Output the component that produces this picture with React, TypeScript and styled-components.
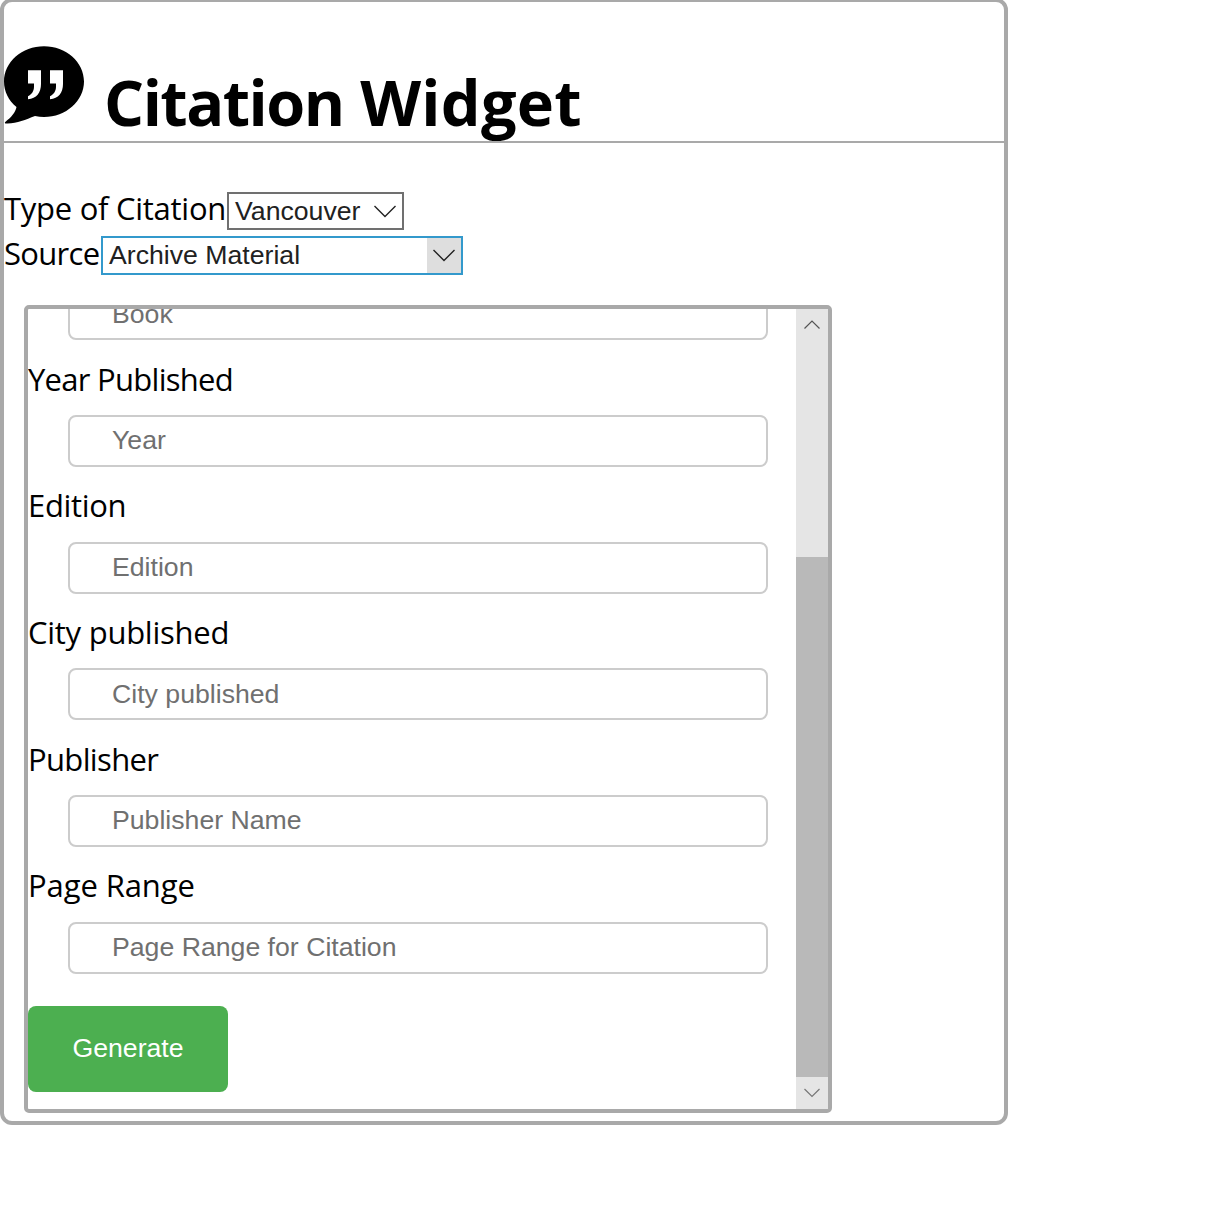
import React from "react";
import styled, { createGlobalStyle } from "styled-components";

const GlobalStyle = createGlobalStyle`
  *, *::before, *::after { box-sizing: border-box; }
  body {
    margin: 0;
    background: #fff;
    color: #000;
    font-family: "Segoe UI", "Open Sans", "Noto Sans", sans-serif;
  }
`;

const Widget = styled.main`
  display: flow-root;
  width: 1008px;
  height: 1127px;
  margin-top: -2px;
  border: 4px solid #a9a9a9;
  border-radius: 12px;
`;

const Header = styled.header`
  display: flex;
  align-items: flex-start;
  height: 141px;
  padding-top: 42px;
  border-bottom: 2px solid #a9a9a9;
`;

const Logo = styled.svg`
  flex: none;
  width: 80px;
  height: 82px;
`;

const Title = styled.h1`
  margin: 16px 0 0 20px;
  font-size: 63px;
  font-weight: 700;
  line-height: 84px;
  white-space: nowrap;
`;

const Word = styled.span<{ $spacing: number }>`
  letter-spacing: ${(p) => p.$spacing}px;
`;

const Options = styled.div`
  display: flex;
  flex-direction: column;
  gap: 5px;
  padding-top: 49px;
`;

const OptionRow = styled.div`
  display: flex;
  align-items: flex-start;
  height: 39px;
`;

const Caption = styled.label<{ $width?: number; $spacing?: number; $line?: number }>`
  display: block;
  flex: none;
  width: ${(p) => (p.$width ? `${p.$width}px` : "auto")};
  font-size: 31px;
  line-height: ${(p) => p.$line ?? 40}px;
  letter-spacing: ${(p) => p.$spacing ?? 0}px;
  white-space: nowrap;
`;

const SelectBox = styled.button<{ $width: number; $active?: boolean }>`
  display: flex;
  align-items: stretch;
  justify-content: space-between;
  width: ${(p) => p.$width}px;
  height: ${(p) => (p.$active ? 39 : 38)}px;
  padding: 0 0 0 6px;
  border: 2px solid ${(p) => (p.$active ? "#3399cc" : "#707070")};
  background: #fff;
  color: #212121;
  font-family: "Liberation Sans", Arial, sans-serif;
  font-size: 26.67px;
  line-height: 34px;
`;

const Arrow = styled.span<{ $active?: boolean }>`
  display: flex;
  align-items: center;
  justify-content: center;
  width: 34px;
  background: ${(p) => (p.$active ? "#dedede" : "transparent")};
`;

const Panel = styled.section`
  display: flex;
  width: 808px;
  height: 808px;
  margin: 30px 0 0 20px;
  border: 4px solid #a9a9a9;
  border-radius: 5px;
  overflow: hidden;
`;

const Form = styled.form`
  flex: 1;
  overflow: hidden;
`;

const Fields = styled.div`
  margin-top: -95.33px;
`;

const Field = styled.div`
  height: 126.67px;
  padding-top: 18.5px;
`;

const Input = styled.input`
  display: block;
  width: 700px;
  height: 52px;
  margin: 16.17px 0 0 40px;
  padding: 0 42px;
  border: 2px solid #ccc;
  border-radius: 8px;
  outline: none;
  background: #fff;
  font-family: "Liberation Sans", Arial, sans-serif;
  font-size: 26.67px;
  &::placeholder { color: #707070; opacity: 1; }
`;

const Generate = styled.button`
  display: block;
  width: 200px;
  height: 86px;
  margin-top: 32.33px;
  padding: 0 0 1px;
  border: 0;
  border-radius: 8px;
  background: #4caf50;
  color: #fff;
  font-family: "Liberation Sans", Arial, sans-serif;
  font-size: 26.67px;
`;

const Scrollbar = styled.div`
  display: flex;
  flex-direction: column;
  width: 32px;
  background: #e5e5e5;
`;

const ScrollButton = styled.div`
  display: flex;
  align-items: center;
  justify-content: center;
  height: 32px;
`;

const Track = styled.div`
  display: flex;
  flex: 1;
  align-items: flex-end;
`;

const Thumb = styled.div`
  width: 100%;
  height: 520px;
  background: #b9b9b9;
`;

function Chevron({ up, width = 22, color = "#222", stroke = 1.4 }: { up?: boolean; width?: number; color?: string; stroke?: number }) {
  return (
    <svg width={width} height={width / 2 + 2} viewBox={`0 0 ${width} ${width / 2 + 2}`} fill="none" stroke={color} strokeWidth={stroke}>
      <path d={up ? `M.5 ${width / 2 + 0.5}L${width / 2} 1L${width - 0.5} ${width / 2 + 0.5}` : `M.5 1L${width / 2} ${width / 2 + 0.5}L${width - 0.5} 1`} />
    </svg>
  );
}

const fields = [
  { label: "Title", hint: "Book", spacing: 0 },
  { label: "Year Published", hint: "Year", spacing: -0.72 },
  { label: "Edition", hint: "Edition", spacing: -0.35 },
  { label: "City published", hint: "City published", spacing: -0.26 },
  { label: "Publisher", hint: "Publisher Name", spacing: -0.65 },
  { label: "Page Range", hint: "Page Range for Citation", spacing: -0.1 },
];

export default function App() {
  return (
    <>
      <GlobalStyle />
      <Widget>
        <Header>
          <Logo viewBox="0 0 80 82" aria-hidden="true">
            <path fill="#000" d="M40 2.2C62 2.2 80 18 80 37.5S62 73 40 73C37 73 34 72.7 31 72.1C21 76 12 80 1.5 79.4C.6 79.3.7 78.3 1.5 77.7C7 73.5 11.5 68.5 12.5 63C4.5 56.5 0 47.5 0 37.5C0 18 18 2.2 40 2.2Z" />
            <path fill="#fff" d="M24 26.3H37V40C37 48.5 32.5 54.8 24 55.2V52.2C27.8 50.5 30 47 30 42.8V39.4H24ZM46 26.3H59V40C59 48.5 54.5 54.8 46 55.2V52.2C49.8 50.5 52 47 52 42.8V39.4H46Z" />
          </Logo>
          <Title>
            <Word $spacing={-1.5}>Citation</Word> <Word $spacing={0.28}>Widget</Word>
          </Title>
        </Header>
        <Options>
          <OptionRow>
            <Caption $width={223} $line={33} $spacing={-0.27}>Type of Citation</Caption>
            <SelectBox $width={177}>
              Vancouver
              <Arrow><Chevron /></Arrow>
            </SelectBox>
          </OptionRow>
          <OptionRow>
            <Caption $width={97} $line={35} $spacing={-0.7}>Source</Caption>
            <SelectBox $width={362} $active>
              Archive Material
              <Arrow $active><Chevron /></Arrow>
            </SelectBox>
          </OptionRow>
        </Options>
        <Panel>
          <Form onSubmit={(e: React.FormEvent) => e.preventDefault()}>
            <Fields>
              {fields.map((f) => (
                <Field key={f.label}>
                  <Caption $spacing={f.spacing}>{f.label}</Caption>
                  <Input placeholder={f.hint} />
                </Field>
              ))}
            </Fields>
            <Generate type="submit">Generate</Generate>
          </Form>
          <Scrollbar>
            <ScrollButton><Chevron up width={16} color="#555" stroke={1.2} /></ScrollButton>
            <Track><Thumb /></Track>
            <ScrollButton><Chevron width={16} color="#777" stroke={1.2} /></ScrollButton>
          </Scrollbar>
        </Panel>
      </Widget>
    </>
  );
}
